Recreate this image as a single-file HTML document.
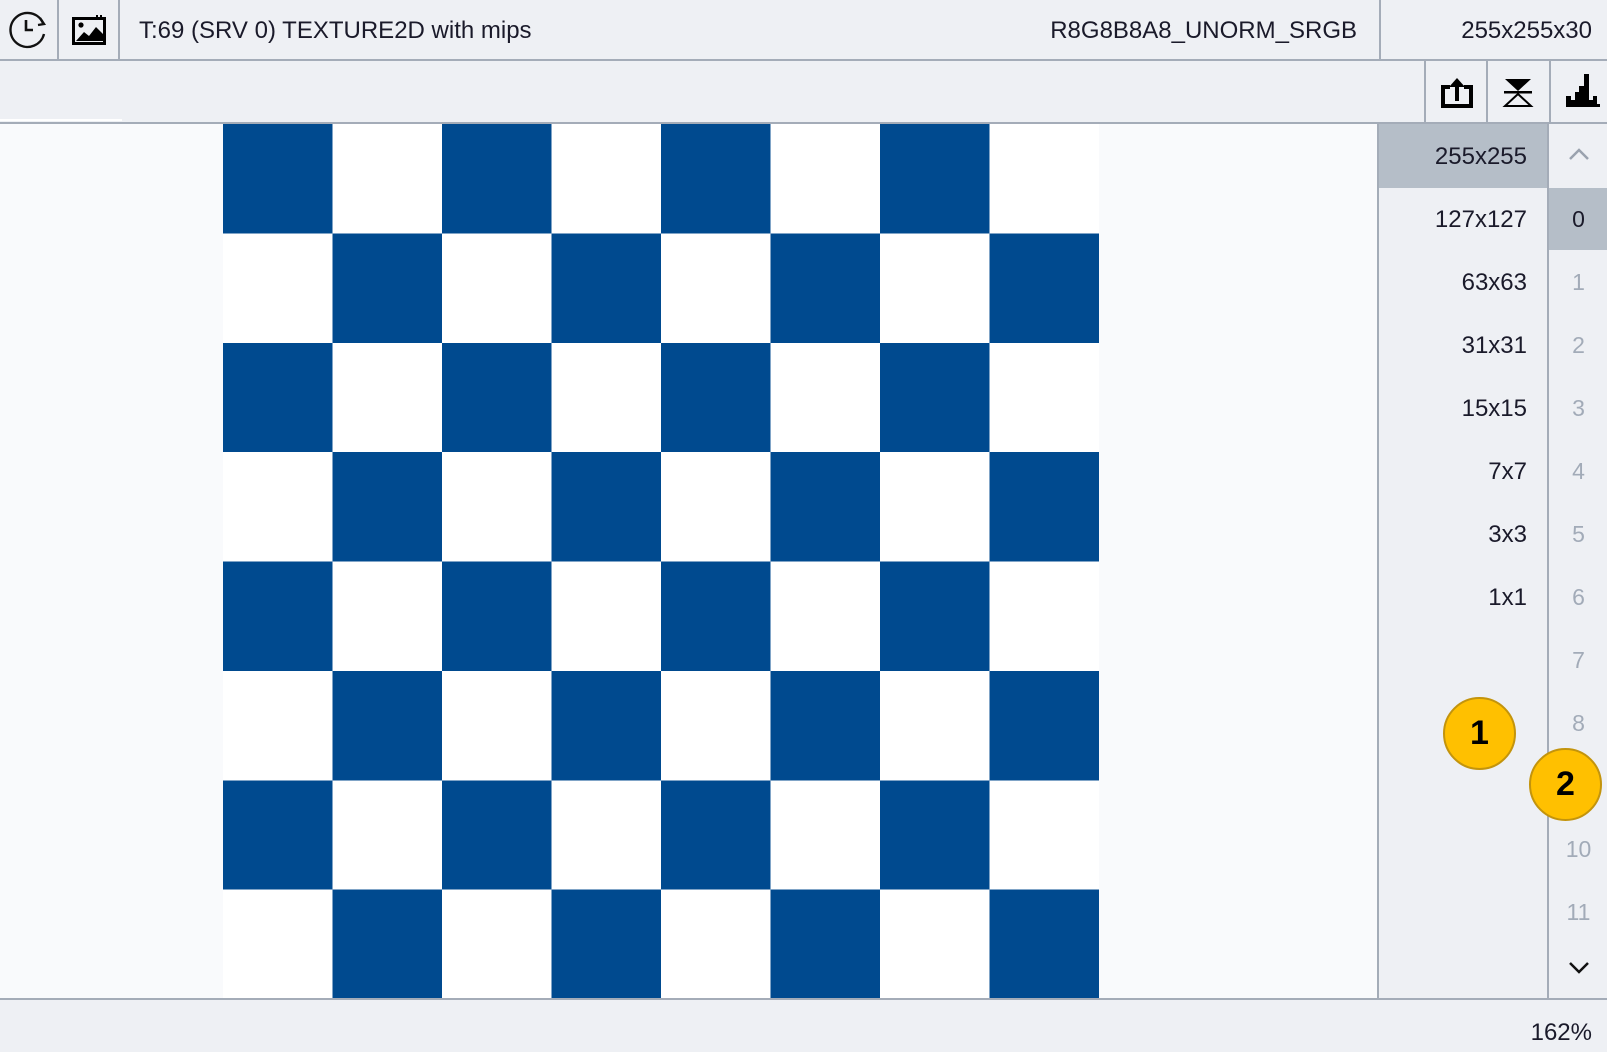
<!DOCTYPE html>
<html><head><meta charset="utf-8"><style>
*{margin:0;padding:0;box-sizing:border-box}
body{width:1607px;height:1052px;overflow:hidden;background:#eef0f4;font-family:"Liberation Sans",sans-serif;position:relative;color:#1a1a2a}
.abs{position:absolute}
.top{left:0;top:0;width:1607px;height:61px;border-bottom:2px solid #a4acb8;background:#eef0f4}
.vl{position:absolute;width:2px;background:#a4acb8}
.txt{position:absolute;font-size:24px;line-height:30px}
.row{position:absolute;height:63px;line-height:63px;font-size:24px;text-align:right}
.num{position:absolute;left:1550px;width:57px;height:63px;line-height:63px;font-size:23px;text-align:center;color:#a2abb8}
.badge{position:absolute;width:73px;height:73px;border-radius:50%;background:#ffc000;border:2px solid #c3940c;font-weight:bold;font-size:34px;line-height:69px;text-align:center;color:#000}
</style></head><body>
<div class="abs top"></div>
<div class="vl" style="left:57px;top:0;height:60px"></div>
<div class="vl" style="left:118px;top:0;height:60px"></div>
<div class="vl" style="left:1379px;top:0;height:60px"></div>
<svg class="abs" style="left:7px;top:9px" width="42" height="42" viewBox="0 0 42 42"><path d="M36 14 A17 17 0 1 0 37 25" fill="none" stroke="#111" stroke-width="2.4"/><path d="M33 9 L37 15 L31 16" fill="none" stroke="#111" stroke-width="2.4"/><path d="M19 11 V21 H26" fill="none" stroke="#111" stroke-width="2.6"/></svg>
<svg class="abs" style="left:72px;top:15px" width="34" height="30" viewBox="0 0 34 30"><rect x="1.5" y="3.5" width="31" height="25" fill="none" stroke="#000" stroke-width="3"/><rect x="24" y="0" width="2" height="3" fill="#000"/><rect x="28" y="0" width="2" height="3" fill="#000"/><path d="M4 26 L12 17 L17 21 L24 12 L31 19 V26 Z" fill="#000"/><circle cx="9" cy="10" r="2.6" fill="#000"/></svg>
<div class="txt" style="left:139px;top:16px">T:69 (SRV 0) TEXTURE2D with mips</div>
<div class="txt" style="right:250px;top:16px">R8G8B8A8_UNORM_SRGB</div>
<div class="txt" style="right:15px;top:16px">255x255x30</div>
<div class="abs" style="left:0;top:119px;width:122px;height:2px;background:#fff"></div>
<div class="abs" style="left:0;top:122px;width:1607px;height:2px;background:#a4acb8"></div>
<div class="vl" style="left:1424px;top:61px;height:62px"></div>
<div class="vl" style="left:1486px;top:61px;height:62px"></div>
<div class="vl" style="left:1549px;top:61px;height:62px"></div>
<svg class="abs" style="left:1440px;top:76px" width="34" height="32" viewBox="0 0 34 32"><path d="M10 11 H3 V30 H31 V11 H24" fill="none" stroke="#000" stroke-width="4"/><path d="M17 25 V5" stroke="#000" stroke-width="4"/><path d="M9 11 L17 2 L25 11 Z" fill="#000"/></svg>
<svg class="abs" style="left:1502px;top:78px" width="32" height="30" viewBox="0 0 32 30"><path d="M3 1 H29 L16 13 Z" fill="#000"/><rect x="2" y="13" width="28" height="2.5" fill="#000"/><path d="M16 16 L3 28 H29 Z" fill="none" stroke="#000" stroke-width="2"/></svg>
<svg class="abs" style="left:1565px;top:74px" width="36" height="34" viewBox="0 0 36 34"><path d="M1 33 V22 H6 V26 H10 V18 H14 V12 H19 V0 H24 V26 H28 V22 H32 V30 H35 V33 Z" fill="#000"/></svg>
<div class="abs" style="left:0;top:124px;width:1378px;height:875px;background:#f9fafc"></div>
<svg class="abs" style="left:223px;top:124px" width="876" height="875" viewBox="0 0 8 8" preserveAspectRatio="none" shape-rendering="crispEdges"><rect width="8" height="8" fill="#fff"/><g fill="#004a8f">
<rect x="0" y="0" width="1" height="1"/><rect x="2" y="0" width="1" height="1"/><rect x="4" y="0" width="1" height="1"/><rect x="6" y="0" width="1" height="1"/>
<rect x="1" y="1" width="1" height="1"/><rect x="3" y="1" width="1" height="1"/><rect x="5" y="1" width="1" height="1"/><rect x="7" y="1" width="1" height="1"/>
<rect x="0" y="2" width="1" height="1"/><rect x="2" y="2" width="1" height="1"/><rect x="4" y="2" width="1" height="1"/><rect x="6" y="2" width="1" height="1"/>
<rect x="1" y="3" width="1" height="1"/><rect x="3" y="3" width="1" height="1"/><rect x="5" y="3" width="1" height="1"/><rect x="7" y="3" width="1" height="1"/>
<rect x="0" y="4" width="1" height="1"/><rect x="2" y="4" width="1" height="1"/><rect x="4" y="4" width="1" height="1"/><rect x="6" y="4" width="1" height="1"/>
<rect x="1" y="5" width="1" height="1"/><rect x="3" y="5" width="1" height="1"/><rect x="5" y="5" width="1" height="1"/><rect x="7" y="5" width="1" height="1"/>
<rect x="0" y="6" width="1" height="1"/><rect x="2" y="6" width="1" height="1"/><rect x="4" y="6" width="1" height="1"/><rect x="6" y="6" width="1" height="1"/>
<rect x="1" y="7" width="1" height="1"/><rect x="3" y="7" width="1" height="1"/><rect x="5" y="7" width="1" height="1"/><rect x="7" y="7" width="1" height="1"/>
</g></svg>
<div class="vl" style="left:1377px;top:124px;height:875px"></div>
<div class="vl" style="left:1547px;top:124px;height:875px"></div>
<div class="abs" style="left:1379px;top:124px;width:168px;height:64px;background:#b5bec8"></div>
<div class="abs" style="left:1549px;top:188px;width:58px;height:62px;background:#b5bec8"></div>
<div class="row" style="left:1379px;width:148px;top:125px">255x255</div>
<div class="row" style="left:1379px;width:148px;top:188px">127x127</div>
<div class="row" style="left:1379px;width:148px;top:251px">63x63</div>
<div class="row" style="left:1379px;width:148px;top:314px">31x31</div>
<div class="row" style="left:1379px;width:148px;top:377px">15x15</div>
<div class="row" style="left:1379px;width:148px;top:440px">7x7</div>
<div class="row" style="left:1379px;width:148px;top:503px">3x3</div>
<div class="row" style="left:1379px;width:148px;top:566px">1x1</div>
<svg class="abs" style="left:1568px;top:147px" width="22" height="14" viewBox="0 0 22 14"><path d="M2 12 L11 3 L20 12" fill="none" stroke="#9aa2ae" stroke-width="2.5"/></svg>
<div class="num" style="top:188px;color:#1a1a2a">0</div>
<div class="num" style="top:251px">1</div>
<div class="num" style="top:314px">2</div>
<div class="num" style="top:377px">3</div>
<div class="num" style="top:440px">4</div>
<div class="num" style="top:503px">5</div>
<div class="num" style="top:566px">6</div>
<div class="num" style="top:629px">7</div>
<div class="num" style="top:692px">8</div>
<div class="num" style="top:818px">10</div>
<div class="num" style="top:881px">11</div>
<svg class="abs" style="left:1568px;top:961px" width="22" height="14" viewBox="0 0 22 14"><path d="M2 2 L11 11 L20 2" fill="none" stroke="#111" stroke-width="2.5"/></svg>
<div class="abs" style="left:0;top:998px;width:1607px;height:2px;background:#a4acb8"></div>
<div class="txt" style="right:15px;top:1018px">162%</div>
<div class="badge" style="left:1443px;top:697px">1</div>
<div class="badge" style="left:1529px;top:748px">2</div>
</body></html>
